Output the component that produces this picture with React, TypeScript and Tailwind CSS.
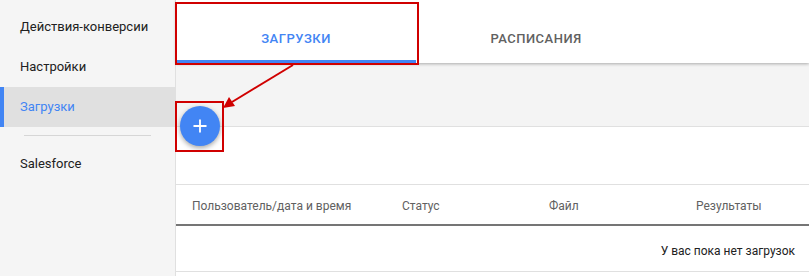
import { Plus } from 'lucide-react'

const navItems = [
  { label: 'Действия-конверсии', active: false },
  { label: 'Настройки', active: false },
  { label: 'Загрузки', active: true },
]

const columns = [
  { label: 'Пользователь/дата и время', className: 'w-[210px]' },
  { label: 'Статус', className: 'w-[147px]' },
  { label: 'Файл', className: 'w-[147px]' },
  { label: 'Результаты', className: 'flex-1' },
]

export default function App() {
  return (
    <div className="relative flex h-[276px] w-[809px] overflow-hidden bg-white font-['Roboto',sans-serif]">
      {/* sidebar */}
      <aside className="flex w-[176px] shrink-0 flex-col border-r border-[#e0e0e0] bg-[#f5f5f5] pt-[7px]">
        {navItems.map((item) => (
          <div
            key={item.label}
            className={
              item.active
                ? 'flex h-10 items-center border-l-4 border-[#4285f4] bg-[#e0e0e0] pl-4 text-[13px] text-[#4285f4]'
                : 'flex h-10 items-center pl-5 text-[13px] text-[#212121]'
            }
          >
            {item.label}
          </div>
        ))}
        <div className="mx-6 mt-2 mb-2 h-px bg-[#d6d6d6]" />
        <div className="flex h-10 items-center pl-5 text-[13px] text-[#212121]">
          Salesforce
        </div>
      </aside>

      {/* main */}
      <main className="flex flex-1 flex-col">
        <div className="relative z-10 flex h-[63px] bg-white shadow-[0_1px_3px_rgba(0,0,0,0.3)]">
          <div className="flex w-[240px] items-end justify-center border-b-[3px] border-[#4285f4] pb-[12px] text-[13px] font-medium tracking-[0.5px] text-[#4285f4]">
            ЗАГРУЗКИ
          </div>
          <div className="flex w-[240px] items-end justify-center pb-[15px] text-[13px] font-medium tracking-[0.5px] text-[#616161]">
            РАСПИСАНИЯ
          </div>
        </div>

        <div className="relative h-[64px] border-b border-[#e0e0e0] bg-[#f4f4f4]">
          <button
            type="button"
            className="absolute left-[4px] top-[43px] flex h-10 w-10 items-center justify-center rounded-full bg-[#4285f4] text-white shadow-[0_2px_5px_rgba(0,0,0,0.35)]"
          >
            <Plus className="h-5 w-5" strokeWidth={2.2} />
          </button>
        </div>

        <div className="h-[57px]" />

        <div className="flex h-[42px] items-center border-t border-[#e0e0e0] border-b-2 border-b-[#757575] pl-[16px] pt-[2px] text-[12px] text-[#616161]">
          {columns.map((col) => (
            <div key={col.label} className={col.className}>
              {col.label}
            </div>
          ))}
        </div>

        <div className="flex h-[46px] items-center justify-end border-b border-[#e0e0e0] pr-[14px] pt-[4px] text-[12px] text-[#212121]">
          У вас пока нет загрузок
        </div>
      </main>

      {/* annotations */}
      <div className="pointer-events-none absolute left-[175px] top-[2px] z-20 h-[63px] w-[244px] border-2 border-[#d00000]" />
      <div className="pointer-events-none absolute left-[175px] top-[101px] z-20 h-[51px] w-[49px] border-2 border-[#d00000]" />
      <svg
        className="pointer-events-none absolute left-0 top-0 z-20"
        width="809"
        height="276"
        viewBox="0 0 809 276"
      >
        <line x1="293" y1="65" x2="232" y2="102" stroke="#d00000" strokeWidth="2" />
        <polygon points="223,108 229,97 235,106" fill="#d00000" />
      </svg>
    </div>
  )
}
